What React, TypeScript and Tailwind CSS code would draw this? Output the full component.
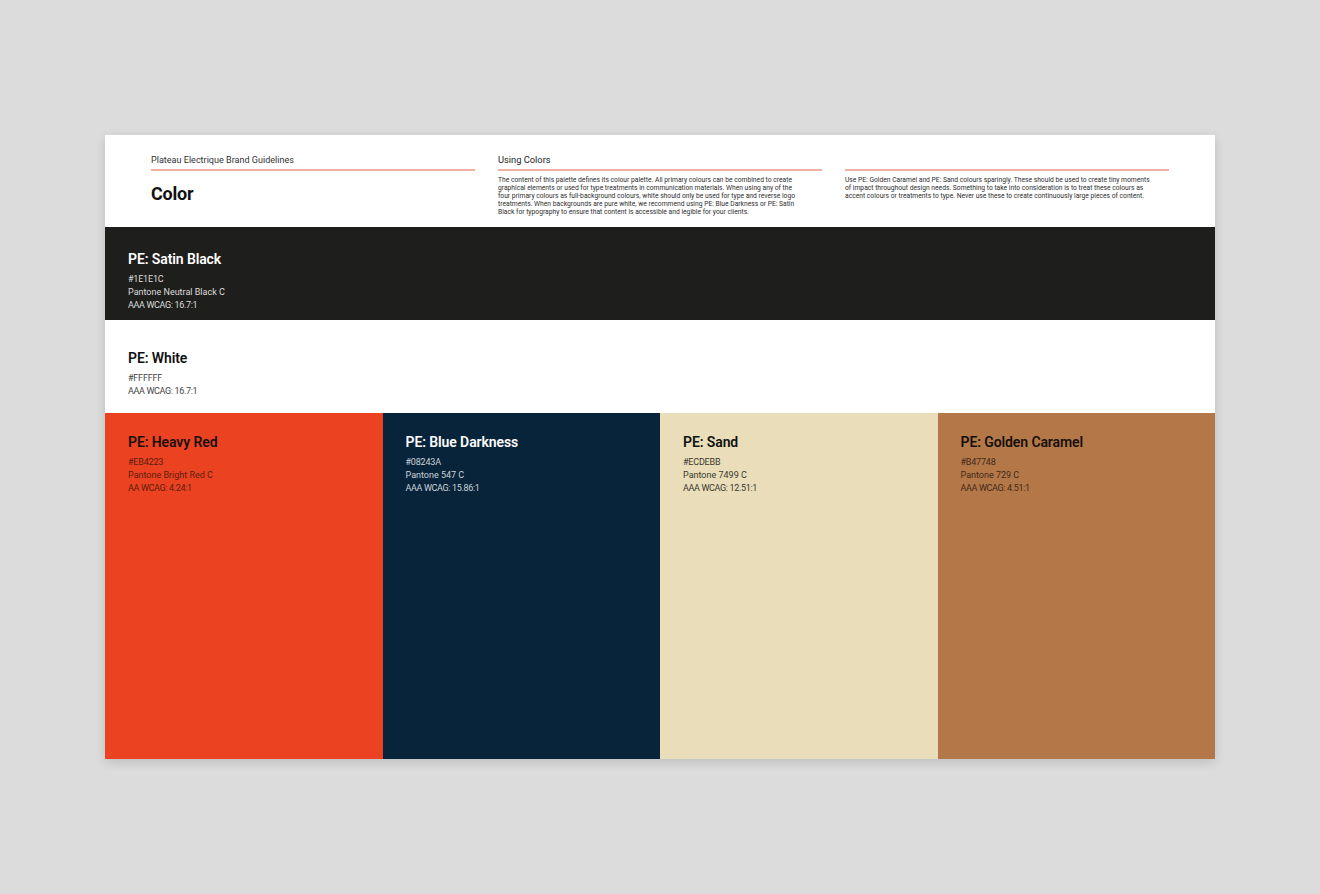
const font = "font-['Roboto',sans-serif]";

type Swatch = {
  name: string;
  hex: string;
  pantone?: string;
  wcag: string;
  bg: string;
  title: string;
  meta: string;
};

const swatches: Swatch[] = [
  { name: 'PE: Heavy Red', hex: '#EB4223', pantone: 'Pantone Bright Red C', wcag: 'AA WCAG: 4.24:1', bg: 'bg-[#eb4321]', title: 'text-[#1a100c]', meta: 'text-[#5e1d0e]' },
  { name: 'PE: Blue Darkness', hex: '#08243A', pantone: 'Pantone 547 C', wcag: 'AAA WCAG: 15.86:1', bg: 'bg-[#08243a]', title: 'text-white', meta: 'text-[#ccd3d8]' },
  { name: 'PE: Sand', hex: '#ECDEBB', pantone: 'Pantone 7499 C', wcag: 'AAA WCAG: 12.51:1', bg: 'bg-[#e9deb9]', title: 'text-[#111111]', meta: 'text-[#3a372e]' },
  { name: 'PE: Golden Caramel', hex: '#B47748', pantone: 'Pantone 729 C', wcag: 'AAA WCAG: 4.51:1', bg: 'bg-[#b47748]', title: 'text-[#15100b]', meta: 'text-[#3f2a1a]' },
];

function SwatchText({ s }: { s: Swatch }) {
  return (
    <div>
      <h3 className={`text-[14px] leading-[18px] font-semibold tracking-[-0.1px] ${s.title}`}>{s.name}</h3>
      <div className={`mt-[5px] text-[9px] leading-[13px] ${s.meta}`}>
        <p className="tracking-[-0.2px]">{s.hex}</p>
        {s.pantone && <p>{s.pantone}</p>}
        <p className="tracking-[-0.35px]">{s.wcag}</p>
      </div>
    </div>
  );
}

function HeaderColumn({ label, labelClass, bold, body }: { label?: string; labelClass?: string; bold?: string; body?: string }) {
  return (
    <div className="w-[324px]">
      <div className={`h-[16px] leading-[16px] ${labelClass}`}>{label}</div>
      <div className="mt-[1px] h-[2px] bg-[#efb0a2]" />
      {bold && <h1 className="mt-[11px] text-[18px] leading-[24px] font-bold tracking-[-0.2px] text-[#111111]">{bold}</h1>}
      {body && <p className="mt-[5px] w-[306px] text-[6.73px] leading-[8.1px] text-[#2e2e2e]">{body}</p>}
    </div>
  );
}

export default function App() {
  return (
    <div className={`min-h-[894px] bg-[#dcdcdc] pt-[135px] ${font}`}>
      <div className="mx-auto w-[1110px] bg-white shadow-[0_3px_10px_rgba(0,0,0,0.14)]">
        <div className="flex h-[92px] gap-[23px] pl-[46px] pt-[17px]">
          <HeaderColumn label="Plateau Electrique Brand Guidelines" labelClass="text-[9.05px] text-[#333333]" bold="Color" />
          <HeaderColumn
            label="Using Colors"
            labelClass="text-[9.3px] text-[#1c1c1c]"
            body="The content of this palette defines its colour palette. All primary colours can be combined to create graphical elements or used for type treatments in communication materials. When using any of the four primary colours as full-background colours, white should only be used for type and reverse logo treatments. When backgrounds are pure white, we recommend using PE: Blue Darkness or PE: Satin Black for typography to ensure that content is accessible and legible for your clients."
          />
          <HeaderColumn
            body="Use PE: Golden Caramel and PE: Sand colours sparingly. These should be used to create tiny moments of impact throughout design needs. Something to take into consideration is to treat these colours as accent colours or treatments to type. Never use these to create continuously large pieces of content."
          />
        </div>

        <div className="h-[93px] bg-[#1e1e1c] pl-[23px] pt-[23px]">
          <SwatchText s={{ name: 'PE: Satin Black', hex: '#1E1E1C', pantone: 'Pantone Neutral Black C', wcag: 'AAA WCAG: 16.7:1', bg: '', title: 'text-white', meta: 'text-[#dddddd]' }} />
        </div>

        <div className="h-[93px] bg-white pl-[23px] pt-[29px]">
          <SwatchText s={{ name: 'PE: White', hex: '#FFFFFF', wcag: 'AAA WCAG: 16.7:1', bg: '', title: 'text-[#111111]', meta: 'text-[#444444]' }} />
        </div>

        <div className="grid h-[346px] grid-cols-4">
          {swatches.map((s) => (
            <div key={s.name} className={`pl-[23px] pt-[20px] ${s.bg}`}>
              <SwatchText s={s} />
            </div>
          ))}
        </div>
      </div>
    </div>
  );
}
